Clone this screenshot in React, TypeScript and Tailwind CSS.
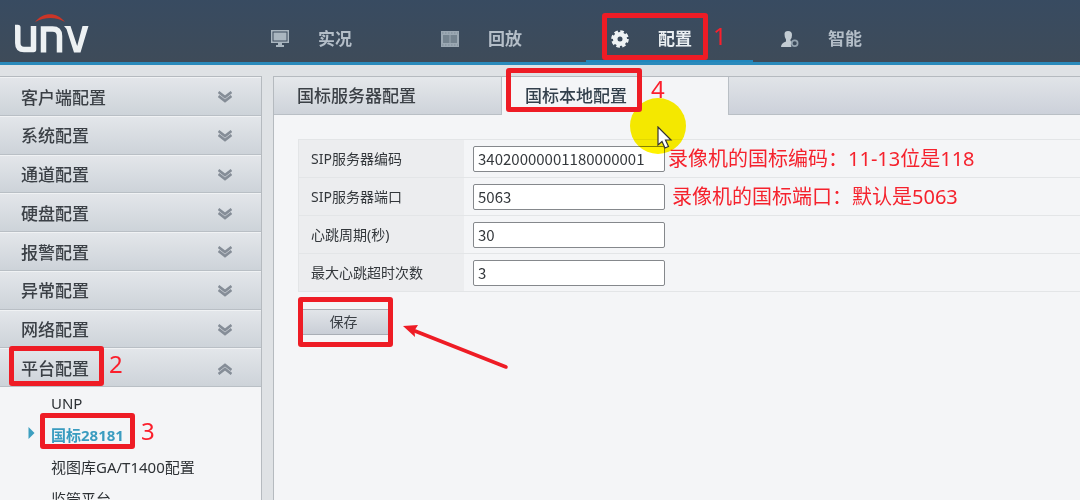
import type { ReactNode } from "react";

const menu = [
  "客户端配置",
  "系统配置",
  "通道配置",
  "硬盘配置",
  "报警配置",
  "异常配置",
  "网络配置",
  "平台配置",
];

const fields = [
  {
    id: "code",
    label: "SIP服务器编码",
    value: "34020000001180000001",
    note: "录像机的国标编码：11-13位是118",
    noteClass: "pl-[3px]",
  },
  {
    id: "port",
    label: "SIP服务器端口",
    value: "5063",
    note: "录像机的国标端口：默认是5063",
    noteClass: "pl-[7px]",
  },
  { id: "heartbeat", label: "心跳周期(秒)", value: "30" },
  { id: "timeouts", label: "最大心跳超时次数", value: "3" },
];

function Mark({ className }: { className: string }) {
  return (
    <span
      className={`pointer-events-none absolute z-10 rounded-[3px] border-[5px] border-[#ee1c25] ${className}`}
    />
  );
}

function Step({ className, children }: { className: string; children: ReactNode }) {
  return (
    <span
      className={`pointer-events-none absolute z-10 text-2xl leading-6 font-normal text-[#fb1f2c] ${className}`}
    >
      {children}
    </span>
  );
}

function Logo() {
  return (
    <svg width="76" height="44" viewBox="0 0 76 44" fill="none" role="img" aria-label="UNV">
      <path d="M21 12C29 1.500 43 1.500 51 12C42 6.500 31 6.500 21 12Z" fill="#cc3527" />
      <g stroke="#edf1f3" strokeWidth="5.500">
        <path d="M1 17.500H3.800V33Q3.800 39.500 10 39.500H19.500V16" strokeLinejoin="round" />
        <path d="M29.500 42.500V19H38.500Q45.500 19 45.500 26V42.500" />
      </g>
      <path d="M50 16H56.500L63.200 36L68.500 16H74.500L66.500 42.500H60L52.500 19Z" fill="#edf1f3" />
    </svg>
  );
}

function MonitorIcon() {
  return (
    <svg width="18" height="18" viewBox="0 0 18 18" fill="#aab6c0">
      <path fillRule="evenodd" d="M0 0H18V13H0ZM1.500 1.500V11.500H16.500V1.500Z" />
      <path d="M2.500 2.500H15.500V10.500H2.500ZM7 13H11V15H13V17H5V15H7Z" />
    </svg>
  );
}

function FilmIcon() {
  return (
    <svg width="18" height="16" viewBox="0 0 18 16">
      <path d="M0 0H18V16H0Z" fill="#9ba8b3" />
      <path d="M2 4H8.500V12H2ZM9.500 4H16V12H9.500Z" fill="#74838f" />
      <path d="M1 2H17M1 14H17" stroke="#7f8d99" strokeDasharray="1.500 1.500" />
    </svg>
  );
}

function GearIcon() {
  return (
    <svg width="18" height="18" viewBox="0 0 18 18">
      <g fill="none" stroke="#eef2f4">
        <circle cx="9" cy="9" r="4.800" strokeWidth="4.600" />
        <circle cx="9" cy="9" r="7.500" strokeWidth="2.600" strokeDasharray="3.600 2.290" />
      </g>
    </svg>
  );
}

function PersonIcon() {
  return (
    <svg width="18" height="17" viewBox="0 0 18 17">
      <path
        d="M3.500 3Q3.500 0 7 0Q11 0 11 4Q11 7 9.500 8.500V10L11 11Q9 13 10.500 16H0Q0 12 5 10.500V8.500Q3.500 7 3.500 3Z"
        fill="#c3ccd3"
      />
      <circle cx="13.700" cy="12.300" r="2.900" fill="none" stroke="#95a3af" strokeWidth="1.700" />
    </svg>
  );
}

function Chevrons({ up }: { up?: boolean }) {
  return (
    <svg
      width="14"
      height="12"
      viewBox="0 0 14 12"
      fill="none"
      stroke="#858d97"
      strokeWidth="2.600"
      className={up ? "rotate-180" : ""}
    >
      <path d="M0.500 1L7 6L13.500 1M0.500 5L7 10L13.500 5" />
    </svg>
  );
}

function NavItem({
  icon,
  label,
  active,
  children,
}: {
  icon: ReactNode;
  label: string;
  active?: boolean;
  children?: ReactNode;
}) {
  return (
    <a
      href="#"
      className={`relative flex w-[170px] items-center pt-4 pl-[25px] text-[17px] font-bold ${
        active ? "text-[#e9eef1]" : "text-[#b4bec8]"
      }`}
    >
      <span className="flex w-[47px]">{icon}</span>
      {label}
      {active && <span className="absolute bottom-0 left-0 h-0.5 w-[167px] bg-[#2087bd]" />}
      {children}
    </a>
  );
}

export default function App() {
  return (
    <div className="flex h-screen flex-col overflow-hidden bg-[#dfe2e5] font-['Noto_Sans','Noto_Sans_CJK_SC',sans-serif] text-[#3b4046]">
      <header className="flex h-[65px] shrink-0 border-b-[3px] border-[#2a8abb] bg-linear-to-b from-[#384b61] to-[#3e4b59]">
        <div className="w-[246px] shrink-0 pt-2.5 pl-3.5">
          <Logo />
        </div>
        <nav className="flex">
          <NavItem icon={<MonitorIcon />} label="实况" />
          <NavItem icon={<FilmIcon />} label="回放" />
          <NavItem icon={<GearIcon />} label="配置" active>
            <Mark className="top-[13px] left-4 h-[47px] w-[106px]" />
            <Step className="top-6 left-[127px]">1</Step>
          </NavItem>
          <NavItem icon={<PersonIcon />} label="智能" />
        </nav>
      </header>

      <div className="flex min-h-0 flex-1 gap-3 pt-[11px]">
        <aside className="w-[262px] shrink-0 border-t border-r border-[#b5babf] bg-[#f4f5f7]">
          <div className="grid h-[310px] auto-rows-fr">
            {menu.map((item) => (
              <div key={item} className="relative">
                <button className="flex h-full w-full items-center justify-between border-t border-b border-t-[#f0f2f4] border-b-[#b9bfc5] bg-linear-to-b from-[#e3e6ea] to-[#cdd3d9] pt-0.5 pr-[29px] pl-[21px] text-[17px] font-medium">
                  {item}
                  <Chevrons up={item === "平台配置"} />
                </button>
                {item === "平台配置" && (
                  <>
                    <Mark className="-top-0.5 left-[9px] h-10 w-[95px]" />
                    <Step className="top-1 left-[109px]">2</Step>
                  </>
                )}
              </div>
            ))}
          </div>
          <ul className="text-[15px] leading-8 text-[#2d3135]">
            <li className="pl-[51px]">
              <a href="#">UNP</a>
            </li>
            <li className="relative flex items-center pl-[51px]">
              <svg width="7" height="12" viewBox="0 0 7 12" className="absolute top-2 left-7">
                <path d="M0.500 0L6.500 6L0.500 12Z" fill="#3c9fc0" />
              </svg>
              <a href="#" className="font-bold text-[#3a9cc0]">
                国标28181
              </a>
              <Mark className="-top-1.5 left-10 h-9 w-[95px]" />
              <Step className="top-0 left-[141px]">3</Step>
            </li>
            <li className="pl-[51px]">
              <a href="#">视图库GA/T1400配置</a>
            </li>
            <li className="pl-[51px]">
              <a href="#">监管平台</a>
            </li>
          </ul>
        </aside>

        <main className="relative -ml-px min-w-0 flex-1 border-t border-l border-[#b5babf] bg-[#f4f5f7]">
          <div className="flex h-[38px] text-[17px] font-medium">
            <button className="w-[228px] border-r border-b border-[#b9bfc5] bg-linear-to-b from-[#e5e8eb] to-[#ced3da] pl-[23px] text-left">
              国标服务器配置
            </button>
            <div className="relative w-[226px]">
              <button className="h-full w-full pl-[23px] text-left text-[#33404c]">
                国标本地配置
              </button>
              <Mark className="-top-[9px] left-1 h-11 w-[136px]" />
              <Step className="top-0 left-[149px]">4</Step>
            </div>
            <div className="flex-1 border-b border-l border-[#b9bfc5] bg-linear-to-b from-[#e1e4e8] to-[#ccd1da]" />
          </div>

          <form className="pt-6 pl-6" onSubmit={(e) => e.preventDefault()}>
            <div className="border-t border-l border-[#e3e5e7]">
              {fields.map((f) => (
                <div key={f.id} className="flex h-[38px] items-center border-b border-[#e3e5e7]">
                  <label
                    htmlFor={f.id}
                    className="flex h-full w-[165px] shrink-0 items-center bg-[#ecedef] pl-3 text-sm text-[#33373b]"
                  >
                    {f.label}
                  </label>
                  <input
                    id={f.id}
                    defaultValue={f.value}
                    className="ml-[9px] h-[26px] w-48 shrink-0 rounded-xs border border-[#85888c] bg-white px-1 font-['Noto_Sans_CJK_SC',sans-serif] text-[15px] text-[#34383c]"
                  />
                  {f.note && (
                    <span className={`text-xl leading-6 whitespace-nowrap text-[#f5222d] ${f.noteClass}`}>
                      {f.note}
                    </span>
                  )}
                </div>
              ))}
            </div>

            <div className="relative mt-[17px] w-[95px] px-1">
              <button className="block h-[26px] w-full border-y border-[#a9aeb5] bg-linear-to-b from-[#e2e5e9] to-[#c9ced6] pr-1 text-sm">
                保存
              </button>
              <Mark className="-top-3 left-0 h-[50px] w-[95px]" />
              <svg
                width="106"
                height="46"
                viewBox="0 0 106 46"
                className="absolute top-4 left-[105px]"
              >
                <path d="M12 6L103 42" stroke="#ee1c25" strokeWidth="3.500" strokeLinecap="round" />
                <path d="M0 1L15 0L11.500 5.500L12 12Z" fill="#ee1c25" />
              </svg>
            </div>
          </form>

          <span className="absolute top-[21px] left-[356px] size-14 rounded-full bg-[#fff200] mix-blend-multiply" />
          <svg
            width="16"
            height="24"
            viewBox="0 0 16 24"
            className="absolute top-[49px] left-[383px]"
          >
            <path
              d="M1 1V19L5 15.500L8 22L11.500 20.500L8.500 14H14Z"
              fill="#fff"
              stroke="#333"
              strokeWidth="1.200"
            />
          </svg>
        </main>
      </div>
    </div>
  );
}
